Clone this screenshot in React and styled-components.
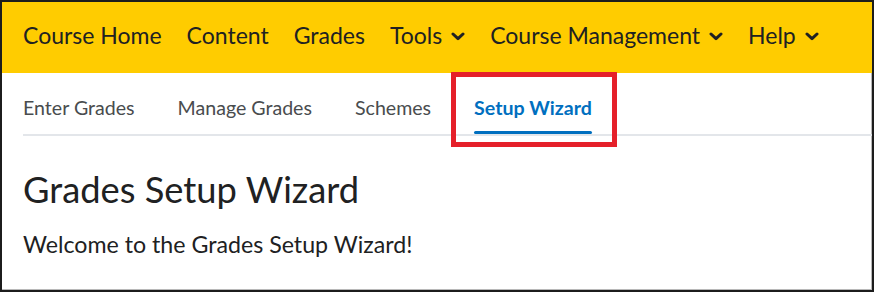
import React from "react";
import styled, { createGlobalStyle } from "styled-components";

const GlobalStyle = createGlobalStyle`
  html, body {
    margin: 0;
    padding: 0;
    background: #ffffff;
  }
  body {
    font-family: Lato, "Open Sans", "Liberation Sans", sans-serif;
    color: #202122;
  }
`;

const NAV = [
  { label: "Course Home" },
  { label: "Content" },
  { label: "Grades" },
  { label: "Tools", menu: true },
  { label: "Course Management", menu: true },
  { label: "Help", menu: true },
];

const TABS = ["Enter Grades", "Manage Grades", "Schemes", "Setup Wizard"];

const Chevron = () => (
  <svg width="14" height="9" viewBox="0 0 14 9">
    <path
      d="M2 2 L7 6.7 L12 2"
      fill="none"
      stroke="#202122"
      strokeWidth="3"
      strokeLinecap="round"
      strokeLinejoin="round"
    />
  </svg>
);

const App = () => {
  return (
    <>
      <GlobalStyle />
      <Frame>
        <NavBar>
          {NAV.map(({ label, menu }) => (
            <NavItem key={label}>
              {label}
              {menu && <Chevron />}
            </NavItem>
          ))}
        </NavBar>
        <TabBar>
          {TABS.map((t) => (
            <Tab key={t} active={t === "Setup Wizard"}>
              {t}
              {t === "Setup Wizard" && <Highlight />}
            </Tab>
          ))}
        </TabBar>
        <Body>
          <Title>Grades Setup Wizard</Title>
          <Intro>Welcome to the Grades Setup Wizard!</Intro>
        </Body>
      </Frame>
    </>
  );
};

export default App;

const Frame = styled.div`
  box-sizing: border-box;
  width: 874px;
  height: 292px;
  border: 2px solid #1c1c1c;
  box-shadow: inset -1px -1px 0 #b8b8b8;
  overflow: hidden;
  display: flex;
  flex-direction: column;
`;

const NavBar = styled.nav`
  height: 71px;
  background: #ffcc00;
  display: flex;
  align-items: center;
  gap: 25px;
  padding: 0 0 6px 21px;
  box-sizing: border-box;
`;

const NavItem = styled.div`
  display: flex;
  align-items: center;
  gap: 9px;
  font-size: 23px;
  color: #202122;
  white-space: nowrap;

  svg {
    margin-top: 3px;
  }
`;

const TabBar = styled.div`
  height: 63px;
  margin-left: 21px;
  border-bottom: 2px solid #e3e6ea;
  display: flex;
  align-items: center;
  gap: 43px;
  box-sizing: border-box;
`;

const Tab = styled.div`
  position: relative;
  height: 100%;
  display: flex;
  align-items: center;
  padding-top: 7px;
  box-sizing: border-box;
  font-size: 19.6px;
  font-weight: ${({ active }) => (active ? 700 : 400)};
  color: ${({ active }) => (active ? "#006fbf" : "#494c4e")};
  white-space: nowrap;

  &::after {
    content: "";
    display: ${({ active }) => (active ? "block" : "none")};
    position: absolute;
    left: 0;
    right: 0;
    bottom: 0;
    height: 3px;
    background: #006fbf;
    border-radius: 2px;
  }
`;

const Highlight = styled.span`
  position: absolute;
  left: -23px;
  right: -25px;
  top: -1px;
  bottom: -13px;
  border: 5px solid #e5202a;
  pointer-events: none;
`;

const Body = styled.div`
  padding: 31px 0 0 21px;
`;

const Title = styled.h1`
  margin: 0;
  font-size: 36.3px;
  font-weight: 400;
  line-height: 44px;
  color: #202122;
`;

const Intro = styled.p`
  margin: 18px 0 0;
  font-size: 23.2px;
  line-height: 30px;
  color: #202122;
`;
